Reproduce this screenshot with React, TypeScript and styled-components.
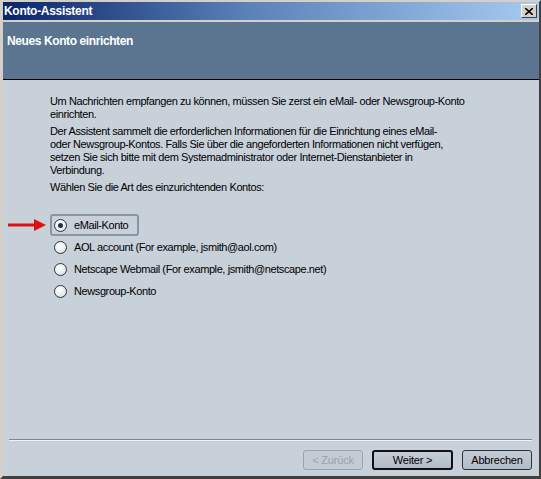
import React from 'react';
import styled, { createGlobalStyle } from 'styled-components';

const GlobalStyle = createGlobalStyle`
  html, body {
    margin: 0;
    padding: 0;
    background: #d4d0c8;
  }
`;

const font = `"Liberation Sans", "DejaVu Sans", Arial, sans-serif`;

const Window = styled.div`
  width: 541px;
  height: 479px;
  box-sizing: border-box;
  display: flex;
  flex-direction: column;
  background: #d4d0c8;
  border-top: 2px solid #d4d0c8;
  border-left: 3px solid #d4d0c8;
  border-right: 2px solid #404040;
  border-bottom: 3px solid #404040;
  font-family: ${font};
  font-size: 11px;
  letter-spacing: -0.4px;
`;

const TitleBar = styled.div`
  height: 18px;
  display: flex;
  align-items: center;
  justify-content: space-between;
  padding: 0 2px 0 1px;
  background: linear-gradient(to right, #0a246a 0%, #5a80b8 45%, #a6caf0 100%);
  margin-bottom: 2px;
`;

const TitleText = styled.span`
  color: #fff;
  font-weight: bold;
  font-size: 12px;
  letter-spacing: -0.3px;
`;

const CloseButton = styled.div`
  width: 16px;
  height: 14px;
  box-sizing: border-box;
  background: #d4d0c8;
  border-top: 1px solid #fff;
  border-left: 1px solid #fff;
  border-right: 1px solid #404040;
  border-bottom: 1px solid #404040;
  display: flex;
  align-items: center;
  justify-content: center;
`;

const Header = styled.div`
  height: 58px;
  box-sizing: border-box;
  background: #5b7591;
  border-bottom: 1px solid #000;
  padding: 12px 4px 0;
`;

const HeaderTitle = styled.div`
  color: #fff;
  font-weight: bold;
  font-size: 12px;
  letter-spacing: -0.4px;
`;

const Body = styled.div`
  flex: 1;
  display: flex;
  flex-direction: column;
  background: #c8d0da;
`;

const Content = styled.div`
  flex: 1;
  padding: 15px 10px 0 47px;
  color: #000;
`;

const Paragraph = styled.p`
  margin: 0 0 4px;
  line-height: 13px;
`;

const Options = styled.div`
  position: relative;
  margin-top: 20px;
  display: flex;
  flex-direction: column;
  align-items: flex-start;
`;

const OptionRow = styled.label<{ $focused?: boolean }>`
  position: relative;
  height: 22px;
  box-sizing: border-box;
  display: flex;
  align-items: center;
  gap: 7px;
  padding: 0 9px 0 ${({ $focused }) => ($focused ? '2px' : '4px')};
  border: ${({ $focused }) => ($focused ? '2px solid #8a95a3' : 'none')};
  border-radius: 3px;
`;

const Radio = styled.span<{ $checked?: boolean }>`
  width: 13px;
  height: 13px;
  box-sizing: border-box;
  border-radius: 50%;
  border: 1px solid #2e3640;
  background: radial-gradient(circle at 40% 35%, #ffffff 0%, #e8edf2 55%, #c3ccd6 100%);
  display: flex;
  align-items: center;
  justify-content: center;

  &::after {
    content: '';
    width: 5px;
    height: 5px;
    border-radius: 50%;
    background: #2a2f36;
    display: ${({ $checked }) => ($checked ? 'block' : 'none')};
  }
`;

const Arrow = styled.svg`
  position: absolute;
  left: -44px;
  top: 3px;
`;

const Footer = styled.div`
  padding: 0 7px 6px 6px;
`;

const Separator = styled.div`
  height: 0;
  border-top: 1px solid #7c8796;
  border-bottom: 1px solid #eef1f5;
  margin-bottom: 9px;
`;

const ButtonRow = styled.div`
  display: flex;
  justify-content: flex-end;
  gap: 9px;
`;

const Button = styled.button<{ $width: number; $default?: boolean }>`
  width: ${({ $width }) => $width}px;
  height: 20px;
  box-sizing: border-box;
  padding: 0;
  font-family: ${font};
  font-size: 11px;
  letter-spacing: -0.2px;
  color: #000;
  background: linear-gradient(#c4ccd6, #b2bcc8);
  border: ${({ $default }) => ($default ? '2px solid #111' : '1px solid #2d333b')};
  border-radius: 3px;

  &:disabled {
    color: #98a2ae;
    border-color: #9aa4b0;
    background: #c3cbd5;
  }
`;

const options = [
  'eMail-Konto',
  'AOL account (For example, jsmith@aol.com)',
  'Netscape Webmail (For example, jsmith@netscape.net)',
  'Newsgroup-Konto',
];

export default function App() {
  return (
    <>
      <GlobalStyle />
      <Window>
        <TitleBar>
          <TitleText>Konto-Assistent</TitleText>
          <CloseButton>
            <svg width="8" height="7" viewBox="0 0 8 7">
              <path d="M0 0 L8 7 M8 0 L0 7" stroke="#000" strokeWidth="1.6" />
            </svg>
          </CloseButton>
        </TitleBar>
        <Header>
          <HeaderTitle>Neues Konto einrichten</HeaderTitle>
        </Header>
        <Body>
          <Content>
            <Paragraph>
              Um Nachrichten empfangen zu können, müssen Sie zerst ein eMail- oder Newsgroup-Konto
              <br />
              einrichten.
            </Paragraph>
            <Paragraph>
              Der Assistent sammelt die erforderlichen Informationen für die Einrichtung eines eMail-
              <br />
              oder Newsgroup-Kontos. Falls Sie über die angeforderten Informationen nicht verfügen,
              <br />
              setzen Sie sich bitte mit dem Systemadministrator oder Internet-Dienstanbieter in
              <br />
              Verbindung.
            </Paragraph>
            <Paragraph>Wählen Sie die Art des einzurichtenden Kontos:</Paragraph>
            <Options>
              {options.map((label, i) => (
                <OptionRow key={label} $focused={i === 0}>
                  {i === 0 && (
                    <Arrow width="38" height="12" viewBox="0 0 38 12">
                      <path d="M0 6 H28" stroke="#e01010" strokeWidth="3" />
                      <path d="M26 0 L38 6 L26 12 Z" fill="#e01010" />
                    </Arrow>
                  )}
                  <Radio $checked={i === 0} />
                  {label}
                </OptionRow>
              ))}
            </Options>
          </Content>
          <Footer>
            <Separator />
            <ButtonRow>
              <Button $width={60} disabled>
                &lt; Zurück
              </Button>
              <Button $width={81} $default>
                Weiter &gt;
              </Button>
              <Button $width={70}>Abbrechen</Button>
            </ButtonRow>
          </Footer>
        </Body>
      </Window>
    </>
  );
}
